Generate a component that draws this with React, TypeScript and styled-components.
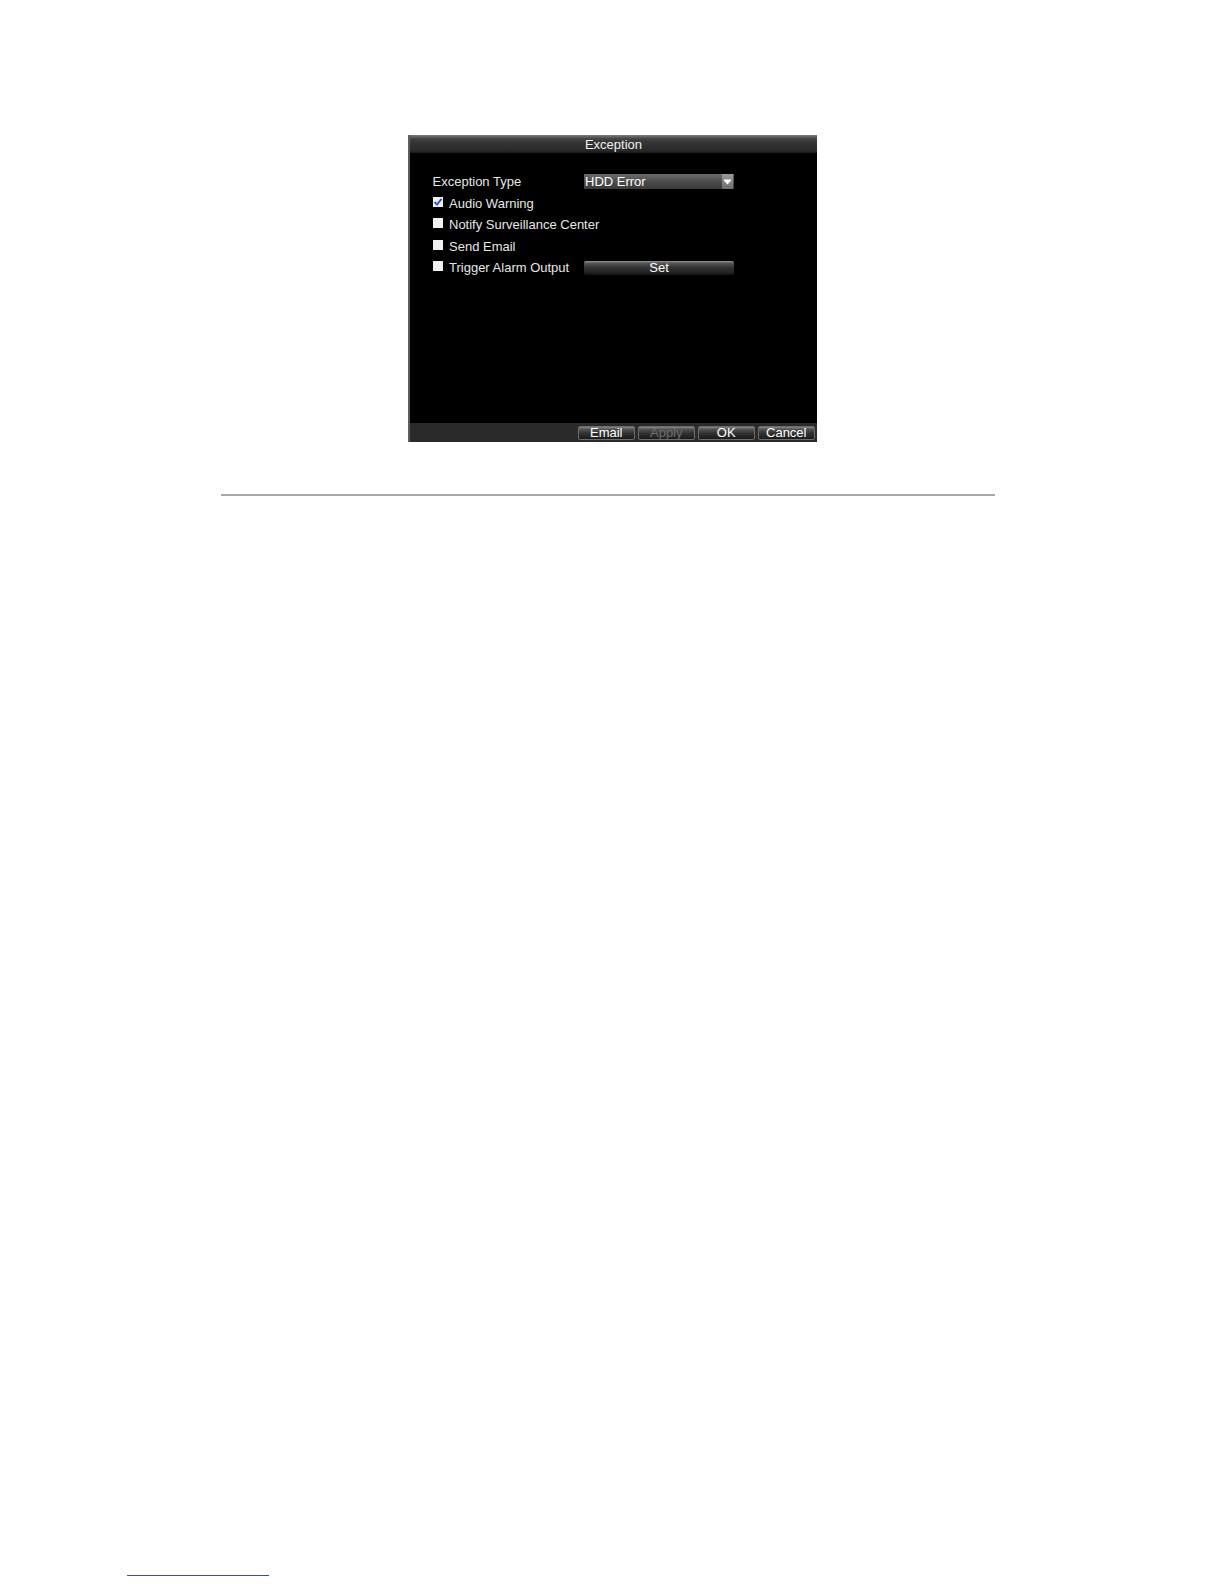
import React from 'react';
import styled, { createGlobalStyle } from 'styled-components';

const GlobalStyle = createGlobalStyle`
	html, body {
		margin: 0;
		padding: 0;
		background: #ffffff;
		overflow: hidden;
	}
	body {
		font-family: "Liberation Sans", Arial, sans-serif;
	}
`;

const Page = styled.div`
	width: 1224px;
	height: 1584px;
	display: flex;
	flex-direction: column;
	background: #ffffff;
	overflow: hidden;
`;

const Dialog = styled.div`
	margin: 135px 0 0 408px;
	width: 409px;
	height: 307px;
	flex-shrink: 0;
	display: flex;
	flex-direction: column;
	background: #000000;
	border-left: 2px solid #5e5e5e;
	box-sizing: border-box;
	color: #e6e6e6;
	font-size: 13px;
`;

const TitleBar = styled.div`
	height: 18px;
	display: flex;
	align-items: center;
	justify-content: center;
	background: linear-gradient(#7c7c7c 0, #5e5e5e 2px, #404040 4px, #343434 8px, #2a2a2a 15px, #1a1a1a 18px);
	color: #f0f0f0;
	font-size: 13px;
	padding-top: 1px;
	box-sizing: border-box;
`;

const Body = styled.div`
	flex: 1;
	display: flex;
	flex-direction: column;
	gap: 6.5px;
	padding: 21px 0 0 22.5px;
`;

const Row = styled.div`
	height: 15px;
	display: grid;
	grid-template-columns: 151.5px auto;
	align-items: center;
`;

const Option = styled.div`
	display: flex;
	align-items: center;
	white-space: nowrap;
`;

const Label = styled.span`
	line-height: 15px;
	white-space: nowrap;
`;

const Check = styled.span`
	width: 10px;
	height: 10px;
	margin: 0 6px 3px 0.5px;
	background: #f2f2f2;
	display: inline-flex;
	align-items: center;
	justify-content: center;
	flex-shrink: 0;
`;

const Select = styled.div`
	width: 150px;
	height: 15px;
	display: flex;
	align-items: center;
	justify-content: space-between;
	background: linear-gradient(#6c6c6c, #4c4c4c 50%, #3a3a3a);
	color: #ffffff;
	padding-left: 1px;
	box-sizing: border-box;
`;

const Arrow = styled.span`
	width: 11px;
	height: 15px;
	margin-right: 1px;
	display: flex;
	align-items: center;
	justify-content: center;
	background: linear-gradient(#9a9a9a, #6e6e6e);
`;

const WideButton = styled.div`
	width: 150px;
	height: 14px;
	display: flex;
	align-items: center;
	justify-content: center;
	background: linear-gradient(#9a9a9a 0, #585858 2px, #363636 6px, #242424 11px, #121212 14px);
	border-radius: 2px;
	color: #ffffff;
	line-height: 14px;
`;

const Footer = styled.div`
	height: 19px;
	display: flex;
	align-items: center;
	justify-content: flex-end;
	gap: 2.5px;
	padding-right: 2px;
	background: #2a2a2a;
`;

const FooterButton = styled.div<{ $disabled?: boolean }>`
	width: 57.5px;
	height: 14px;
	display: flex;
	align-items: center;
	justify-content: center;
	background: linear-gradient(#8a8a8a 0, #565656 2px, #343434 6px, #1e1e1e 11px, #111111 14px);
	border: 1px solid #6c6c6c;
	border-radius: 2px;
	box-sizing: border-box;
	color: ${({ $disabled }) => ($disabled ? '#6e6e6e' : '#ffffff')};
	font-size: 13px;
	line-height: 12px;
`;

const Separator = styled.div`
	margin: 52px 0 0 221px;
	width: 774px;
	height: 2px;
	flex-shrink: 0;
	background: #a8a8a8;
`;

const Spacer = styled.div`
	flex: 1;
`;

const FootLink = styled.div`
	margin: 0 0 8px 127px;
	width: 142px;
	height: 1px;
	flex-shrink: 0;
	background: #2b4fc4;
`;

const CheckMark = () => (
	<svg width="10" height="10" viewBox="0 0 10 10">
		<path d="M1.5 5 L4 7.5 L8.5 1.8" fill="none" stroke="#2a5bd7" strokeWidth="2" />
	</svg>
);

const options = [
	{ label: 'Audio Warning', checked: true },
	{ label: 'Notify Surveillance Center' },
	{ label: 'Send Email' },
];

export default function App() {
	return (
		<>
			<GlobalStyle />
			<Page>
				<Dialog>
					<TitleBar>Exception</TitleBar>
					<Body>
						<Row>
							<Label>Exception Type</Label>
							<Select>
								HDD Error
								<Arrow>
									<svg width="7" height="6" viewBox="0 0 7 6">
										<path d="M0 0.5 H7 V1.5 L3.5 5.5 L0 1.5 Z" fill="#ffffff" />
									</svg>
								</Arrow>
							</Select>
						</Row>
						{options.map((o) => (
							<Row key={o.label}>
								<Option>
									<Check>{o.checked && <CheckMark />}</Check>
									<Label>{o.label}</Label>
								</Option>
							</Row>
						))}
						<Row>
							<Option>
								<Check />
								<Label>Trigger Alarm Output</Label>
							</Option>
							<WideButton>Set</WideButton>
						</Row>
					</Body>
					<Footer>
						<FooterButton>Email</FooterButton>
						<FooterButton $disabled>Apply</FooterButton>
						<FooterButton>OK</FooterButton>
						<FooterButton>Cancel</FooterButton>
					</Footer>
				</Dialog>
				<Separator />
				<Spacer />
				<FootLink />
			</Page>
		</>
	);
}
